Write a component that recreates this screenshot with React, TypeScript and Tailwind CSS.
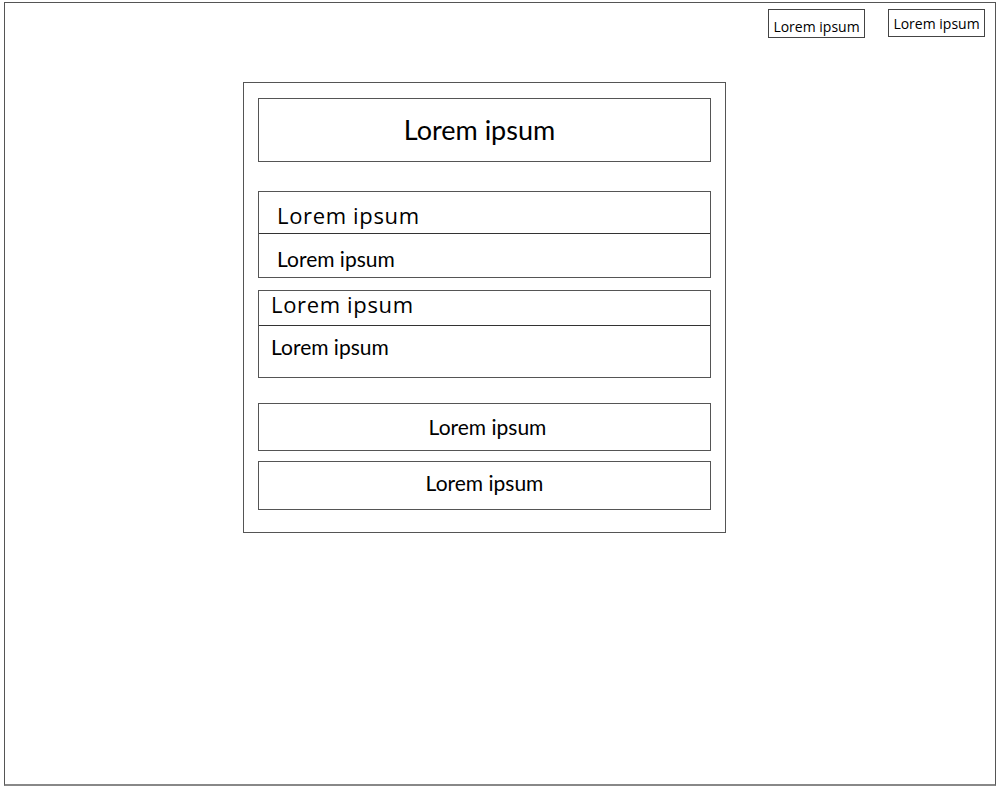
const body = { fontFamily: 'Lato, "Open Sans", sans-serif' };
const head = { fontFamily: '"Open Sans", "Noto Sans", sans-serif' };

function Section({ title, text, headH, bodyH, indent }: { title: string; text: string; headH: string; bodyH: string; indent: string }) {
  return (
    <div className="border border-[#555] text-black">
      <div className={`${headH} ${indent} flex border-b border-[#333] text-[22px] leading-[22px] tracking-[0.03em]`} style={head}>
        {title}
      </div>
      <div className={`${bodyH} ${indent} flex text-[21px]`} style={body}>
        {text}
      </div>
    </div>
  );
}

export default function App() {
  return (
    <div className="w-[1002px] h-[792px] bg-white pt-[2px] pl-[4px]">
      <div className="w-[992px] h-[784px] border border-[#555] border-b-2 border-b-[#888]">
        {/* top right buttons */}
        <div className="flex justify-end gap-[23px] pt-[6px] pr-[10px]">
          <div className="w-[97px] h-[29px] border border-[#444] flex items-center justify-center pt-[6px] text-[14px]" style={head}>
            Lorem ipsum
          </div>
          <div className="w-[97px] h-[28px] border border-[#444] flex items-center justify-center pt-[1px] text-[14px]" style={head}>
            Lorem ipsum
          </div>
        </div>

        {/* card */}
        <div className="ml-[238px] mt-[44px] w-[483px] h-[451px] border border-[#555] px-[14px] pt-[15px]">
          <div className="h-[64px] border border-[#555] flex items-center justify-center pr-[10px] text-[27px]" style={body}>
            Lorem ipsum
          </div>

          <div className="mt-[29px]">
            <Section title="Lorem ipsum" text="Lorem ipsum" headH="h-[42px] items-center pt-[4px]" bodyH="h-[43px] items-center pt-[6px]" indent="pl-[18px]" />
          </div>
          <div className="mt-[12px]">
            <Section title="Lorem ipsum" text="Lorem ipsum" headH="h-[35px] items-start pt-[2px]" bodyH="h-[51px] items-start pt-[5px]" indent="pl-[12px]" />
          </div>

          <div className="mt-[25px] h-[48px] border border-[#555] flex items-center justify-center pl-[6px] text-[21px]" style={body}>
            Lorem ipsum
          </div>
          <div className="mt-[10px] h-[49px] border border-[#555] flex items-center justify-center pb-[5px] text-[21px]" style={body}>
            Lorem ipsum
          </div>
        </div>
      </div>
    </div>
  );
}
